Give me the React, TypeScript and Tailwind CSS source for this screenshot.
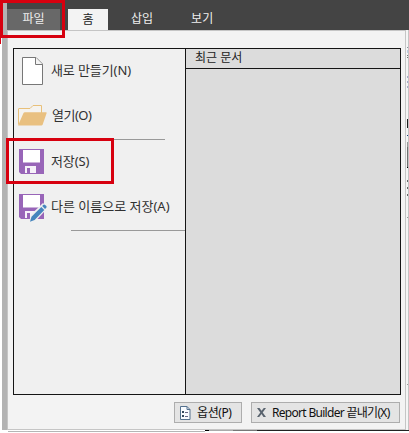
import type { ReactNode } from "react";

function NewIcon() {
  return (
    <svg className="block h-7 w-[29px] shrink-0" viewBox="0 0 29 28">
      <path d="M4.500.5h13.500l6.500 6.500v20.500h-20z" fill="#fff" stroke="#777" />
      <path d="M17.500.5v7h7" fill="#f4f4f4" stroke="#777" />
    </svg>
  );
}

function OpenIcon() {
  return (
    <svg className="block h-[21px] w-[29px] shrink-0" viewBox="0 0 29 21">
      <path d="M.5 19.500V4Q.5 3.500 1 3.500h11l3-3h8.500v8" fill="#f5f3ef" stroke="#e8c07a" />
      <path d="M0 20.500 5.500 8q.4-.8 1.300-.8H28q1 0 .6 1l-4 11.500q-.3.800-1.200.800z" fill="#e9c080" />
    </svg>
  );
}

function SaveIcon({ edit = false }: { edit?: boolean }) {
  return (
    <svg className="block h-7 w-[29px] shrink-0" viewBox="0 0 29 28">
      <path d="M1 0h25v25H3l-2-2z" fill="#9865b8" />
      <path d="M5 1h17v12.500H5z" fill="#fff" />
      <path d="M7 17h11v7H7z" fill="#f6f1f9" />
      <path d="M9 19h3v5H9z" fill="#9865b8" />
      {edit && (
        <g>
          <path d="M11 28 13 20.500 25 9l5 4.800L18 26.500z" fill="#f0f0f0" />
          <path d="m12 27.700 1.500-5L23.300 13l3 3-9.700 9.900z" fill="#4585bd" />
          <path d="m24.200 12 1.300-1.300q.8-.6 1.600.2l1.200 1.200q.7.800 0 1.600L27 15z" fill="#4585bd" />
        </g>
      )}
    </svg>
  );
}

function Item({ icon, children, className }: { icon: ReactNode; children: ReactNode; className: string }) {
  return (
    <div className={`flex items-center pl-1 text-[13px] text-[#303030] ${className}`}>
      {icon}
      {children}
    </div>
  );
}

function RibbonEdge() {
  return (
    <div className="flex w-[3px] shrink-0 flex-col border-r border-[#c4c4c4] bg-[#f5f5f5]">
      <div className="mt-[17px] ml-px h-px bg-[#8d8d9d]" />
      <div className="mt-0.5 ml-px h-[3px] bg-[#c0cbe2]" />
      <div className="mt-0.5 ml-px h-px bg-[#777]" />
      <div className="mt-px ml-px h-px bg-[#777]" />
      <div className="mt-[18px] ml-px h-0.5 bg-[#aaa8cb]" />
      <div className="mt-[3px] ml-px h-0.5 bg-[#aaa8cb]" />
      <div className="mt-[3px] ml-px h-0.5 bg-[#aaa8cb]" />
      <div className="mt-[31px] ml-px h-[9px] bg-[#1e1e1e]" />
      <div className="mt-[7px] ml-px h-px bg-[#193d80]" />
      <div className="mt-[6px] ml-px h-[5px] bg-[#999]" />
      <div className="ml-px h-5 bg-[#707070]" />
      <div className="ml-px h-px bg-black" />
      <div className="mt-3 ml-px h-0.5 bg-[#666]" />
      <div className="mt-[5px] ml-px h-0.5 bg-[#666]" />
      <div className="mt-[5px] ml-px h-0.5 bg-[#666]" />
      <div className="mt-[21px] ml-px h-px bg-[#999]" />
      <div className="mt-[166px] ml-px h-px bg-[#999]" />
    </div>
  );
}

export default function App() {
  return (
    <div className="relative flex h-[433px] w-[409px] flex-col overflow-hidden bg-white font-['Noto_Sans','Noto_Sans_CJK_KR',sans-serif] leading-none whitespace-nowrap">
      <div className="flex min-h-0 flex-1">
        <div className="ml-0.5 w-[5px] shrink-0 bg-[#b3b3b3]" />
        <div className="flex min-w-0 flex-1 flex-col">
          <div className="flex h-[30px] items-end bg-[#444] text-[12px] text-[#eee]">
            <div className="flex h-[21px] w-[53px] items-center justify-center bg-[#686868] pb-0.5">파일</div>
            <div className="ml-2 flex h-[21px] w-10 items-center justify-center bg-[#f3f3f3] text-[#222]">홈</div>
            <div className="ml-[23px] flex h-[21px] items-center pb-px">삽입</div>
            <div className="ml-[38px] flex h-[21px] items-center pb-px">보기</div>
          </div>
          <div className="flex min-h-0 flex-1">
            <div className="flex min-w-0 flex-1 flex-col border border-[#c5c5c5] bg-[#f3f3f3] pt-[17px] pr-[5px] pl-[5px]">
              <div className="flex h-[347px] w-[388px] shrink-0 border border-[#151515]">
                <div className="flex w-[171px] shrink-0 flex-col bg-[#f0f0f0]">
                  <Item icon={<NewIcon />} className="mt-2 h-7">
                    <span className="mb-px ml-1 tracking-[-0.1px]">새로 만들기(N)</span>
                  </Item>
                  <Item icon={<OpenIcon />} className="mt-5 h-[21px]">
                    <span className="ml-[5px] tracking-[-0.5px]">열기(O)</span>
                  </Item>
                  <div className="mt-[13px] ml-[57px] h-px w-[94px] bg-[#999]" />
                  <Item icon={<SaveIcon />} className="mt-[9px] h-7">
                    <span className="mb-[3px] ml-1 tracking-[-0.1px]">저장(S)</span>
                  </Item>
                  <Item icon={<SaveIcon edit />} className="mt-[17px] h-7">
                    <span className="mb-[3px] ml-1">다른 이름으로 저장(A)</span>
                  </Item>
                  <div className="mt-[8px] ml-[57px] h-px bg-[#999]" />
                </div>
                <div className="flex flex-1 flex-col border-l border-[#151515] bg-[#dcdcdc]">
                  <div className="flex h-5 items-center border-b border-[#151515] pb-px pl-[9px] text-[12px] text-[#222]">최근 문서</div>
                </div>
              </div>
              <div className="mt-[7px] flex justify-end gap-[9px] text-[12px] text-[#111]">
                <div className="flex h-[21px] w-[68px] items-center border border-[#adadad] bg-[#e4e4e4] pl-1">
                  <svg className="h-[14px] w-3 shrink-0" viewBox="0 0 12 14">
                    <path d="M1.500.5h6.500l3 3v10h-9.500z" fill="#f8fbff" stroke="#54718e" />
                    <path d="M8 .5v3h3" fill="none" stroke="#54718e" />
                    <path d="M3 5h2v2H3zm0 4h2v2H3z" fill="#344a5e" />
                    <path d="M6 6.500h3M6 10.500h3" stroke="#668" />
                  </svg>
                  <span className="ml-[6px] tracking-[-0.4px]">옵션(P)</span>
                </div>
                <div className="flex h-[21px] w-[149px] items-center border border-[#adadad] bg-[#e4e4e4] pl-[5px]">
                  <svg className="h-[9px] w-[9px] shrink-0" viewBox="0 0 9 9">
                    <path d="M0 0h2.500l2 2.800L6.800 0H9L5.700 4.400 9 9H6.500l-2-3-2.300 3H0l3.300-4.600z" fill="#59636e" />
                  </svg>
                  <span className="ml-[6px] tracking-[-0.7px]">Report Builder 끝내기(X)</span>
                </div>
              </div>
            </div>
            <RibbonEdge />
          </div>
        </div>
      </div>
      <div className="ml-2 flex h-[3px] items-start">
        <div className="mt-px h-px w-[197px] bg-[#b5b5b5]" />
        <div className="h-px w-1 bg-black" />
        <div className="h-px w-6 bg-[#aaa]" />
        <div className="h-px w-6 bg-[#777]" />
        <div className="h-px flex-1 bg-[#222]" />
      </div>
      <div className="absolute top-[38px] left-0 h-[6px] w-px bg-[#d7000f]" />
      <div className="absolute top-0 left-0 h-[38px] w-[65px] border-[3px] border-[#d7000f]" />
      <div className="absolute top-[138px] left-[6px] h-[46px] w-[108px] border-[3px] border-[#d7000f]" />
    </div>
  );
}
